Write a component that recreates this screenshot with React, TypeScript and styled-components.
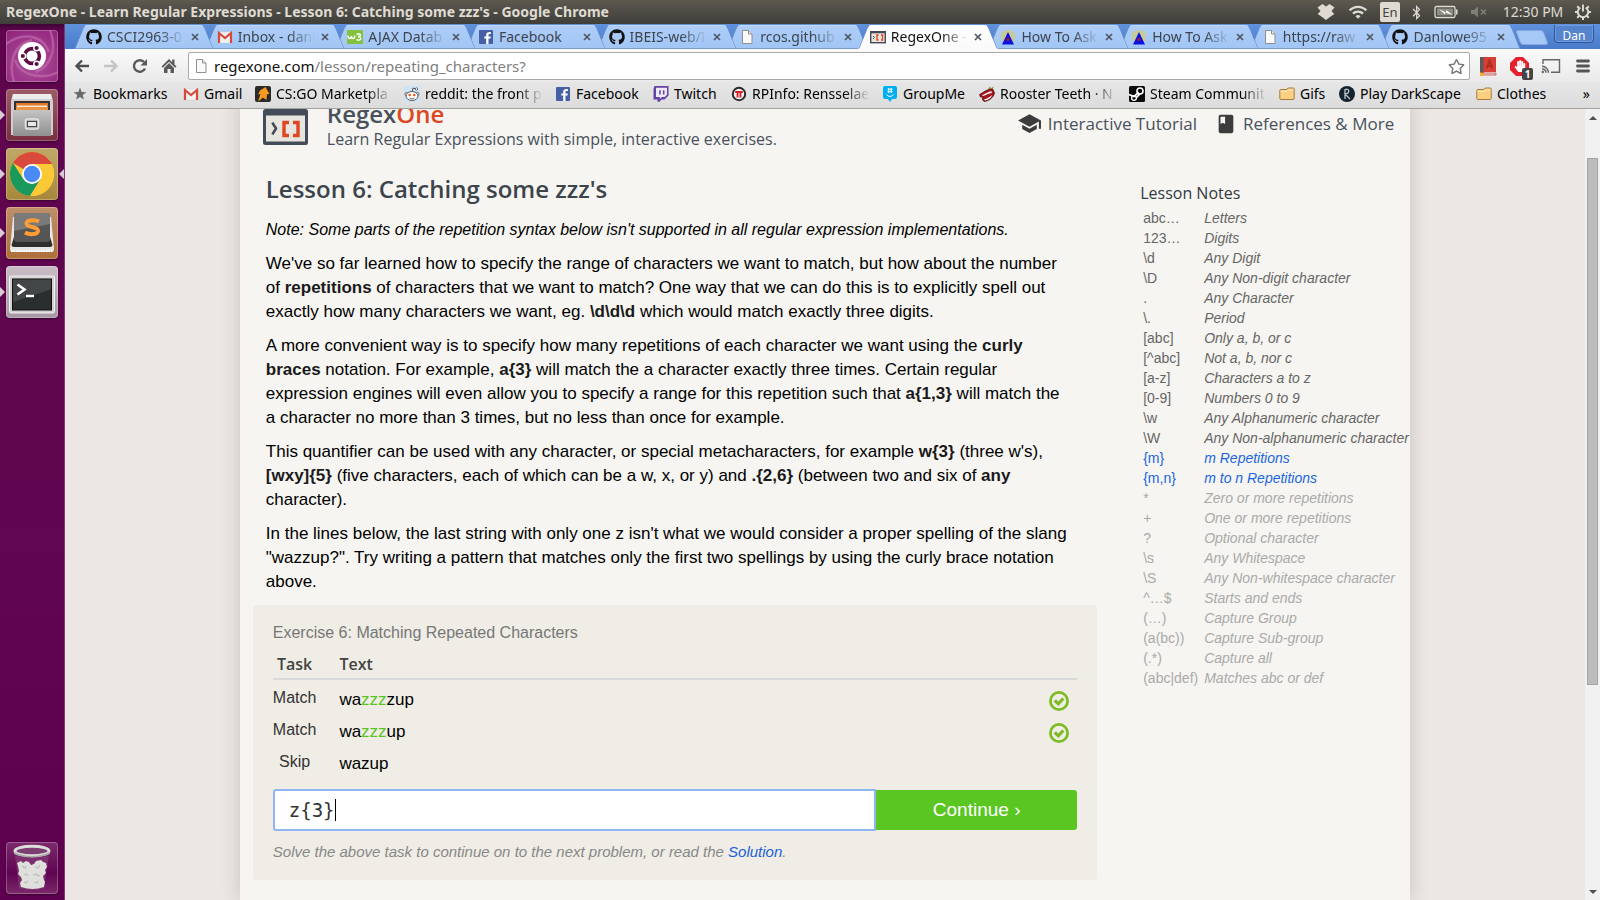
import React from "react";
import styled, { createGlobalStyle, css } from "styled-components";
import { FaGithub, FaBluetoothB, FaHandPaper, FaRegStar } from "react-icons/fa";
import { MdSchool, MdBook, MdWifi } from "react-icons/md";

const UI = `"Noto Sans", "Open Sans", sans-serif`;
const HEAD = `"Open Sans", "Noto Sans", sans-serif`;
const BODY = `"Liberation Sans", Arial, sans-serif`;

const GlobalStyle = createGlobalStyle`
  *, *::before, *::after { box-sizing: border-box; }
  html, body { margin: 0; padding: 0; height: 100%; }
  #root { height: 100%; }
  body { overflow: hidden; font-family: ${BODY}; }
  button, input { font: inherit; margin: 0; }
  button { border: 0; padding: 0; background: none; color: inherit; }
  svg { display: block; flex: none; }
  a { color: inherit; text-decoration: none; }
`;

/* ---------- desktop shell ---------- */

const Desktop = styled.div`
  display: flex;
  flex-direction: column;
  height: 100vh;
  font-family: ${UI};
`;

const MenuBar = styled.header`
  flex: none;
  height: 24px;
  padding: 0 8px 0 6px;
  display: flex;
  align-items: center;
  justify-content: space-between;
  color: #dfdbd2;
  background: linear-gradient(#5d5a4f, #55534b 20%, #3f3e39);
`;

const WindowTitle = styled.div`
  font-size: 14px;
  font-weight: 700;
  line-height: 24px;
  white-space: nowrap;
`;

const Tray = styled.div`
  display: flex;
  align-items: center;
  font-size: 14px;
  line-height: 24px;
`;

const TrayItem = styled.button<{ $w: number; $dim?: boolean }>`
  width: ${(p) => p.$w}px;
  height: 24px;
  display: flex;
  align-items: center;
  justify-content: center;
  white-space: nowrap;
  opacity: ${(p) => (p.$dim ? 0.35 : 1)};
`;

const LangBox = styled.span`
  width: 20px;
  height: 20px;
  border-radius: 2px;
  background: #dfdbd2;
  color: #45433d;
  font-size: 13px;
  line-height: 20px;
  text-align: center;
`;

const Workspace = styled.div`
  flex: 1;
  min-height: 0;
  display: flex;
`;

const Launcher = styled.nav`
  flex: none;
  width: 65px;
  padding: 6px 0 6px 6px;
  display: flex;
  flex-direction: column;
  gap: 7px;
  background: linear-gradient(#3d0433, #5f054e 6px, #610650 60%, #5d004f);
  border-right: 1px solid #7d3a70;
`;

const Tile = styled.button<{ $bg: string; $last?: boolean }>`
  position: relative;
  width: 52px;
  height: 52px;
  flex: none;
  border-radius: 4px;
  background: ${(p) => p.$bg};
  box-shadow: inset 0 0 0 1px rgba(255, 255, 255, 0.25), 0 1px 2px rgba(0, 0, 0, 0.4);
  ${(p) => p.$last && css`margin-top: auto;`}
`;

const Pip = styled.span<{ $right?: boolean }>`
  position: absolute;
  top: 21px;
  border: 5px solid transparent;
  ${(p) =>
    p.$right
      ? css`right: -6px; border-right-color: #d8ccd6; border-left-width: 0;`
      : css`left: -6px; border-left-color: #d8ccd6; border-right-width: 0;`}
`;

/* ---------- browser chrome ---------- */

const Browser = styled.main`
  flex: 1;
  min-width: 0;
  display: flex;
  flex-direction: column;
`;

const TabStrip = styled.div`
  flex: none;
  height: 25px;
  padding: 1px 6px 0 8px;
  display: flex;
  background: linear-gradient(#5f91dc, #4a7bcb);
`;

const Tabs = styled.div`
  flex: 1;
  min-width: 0;
  display: flex;
  padding-right: 12px;
  isolation: isolate;
`;

const Tab = styled.div<{ $active?: boolean; $z: number }>`
  position: relative;
  z-index: ${(p) => p.$z};
  flex: 1 1 0;
  min-width: 0;
  height: 24px;
  margin-right: -12px;
  padding: 0 16px 0 13px;
  display: flex;
  align-items: center;
  gap: 5px;
  color: ${(p) => (p.$active ? "#111" : "#3d444e")};

  &::before,
  &::after {
    content: "";
    position: absolute;
    z-index: -1;
    top: 0;
    bottom: 0;
    border-top: 1px solid ${(p) => (p.$active ? "#fff" : "#c3dbfb")};
    background: ${(p) => (p.$active ? "linear-gradient(#ffffff, #fafafa)" : "linear-gradient(#aecdf8, #a1c6f5)")};
    border-bottom: 1px solid ${(p) => (p.$active ? "#fafafa" : "#7f9dc8")};
  }
  &::before {
    left: 6px;
    right: 50%;
    border-left: 1px solid #6f94c9;
    border-top-left-radius: 4px;
    transform: skewX(-22deg);
  }
  &::after {
    left: 50%;
    margin-left: -16px;
    right: 6px;
    border-right: 1px solid #6f94c9;
    border-top-right-radius: 4px;
    transform: skewX(22deg);
  }
`;

const Fade = styled.span<{ $w?: number; $fade?: boolean }>`
  ${(p) => (p.$w ? css`flex: none; width: ${p.$w}px;` : css`flex: 1; min-width: 0;`)}
  overflow: hidden;
  white-space: nowrap;
  ${(p) => p.$fade && css`mask-image: linear-gradient(90deg, #000 calc(100% - 26px), transparent);`}
`;

const TabTitle = styled(Fade)`
  font-size: 14px;
  line-height: 22px;
`;

const CloseButton = styled.button`
  width: 10px;
  height: 10px;
  flex: none;
`;

const NewTab = styled.button`
  width: 28px;
  height: 15px;
  margin: 5px 6px 0 -4px;
  border: 1px solid #86a9de;
  border-radius: 3px;
  background: #a5c8f7;
  transform: skewX(20deg);
`;

const UserButton = styled.button`
  width: 40px;
  height: 18px;
  margin-left: 2px;
  border: 1px solid #2e5698;
  border-top: 0;
  border-radius: 0 0 4px 4px;
  background: #5583cc;
  box-shadow: inset 0 0 0 1px #6f9ae0;
  color: #fff;
  font-size: 12px;
  line-height: 20px;
  padding-top: 1px;
`;

const Toolbar = styled.div`
  flex: none;
  height: 33px;
  padding: 3px 4px 2px 7px;
  display: flex;
  align-items: center;
  background: linear-gradient(#fafafa, #e9e9e9);
`;

const ToolButton = styled.button<{ $w?: number }>`
  position: relative;
  width: ${(p) => p.$w ?? 29}px;
  height: 28px;
  display: flex;
  align-items: center;
  justify-content: center;
`;

const Omnibox = styled.div`
  flex: 1;
  height: 28px;
  padding: 0 4px 0 4px;
  display: flex;
  align-items: center;
  gap: 5px;
  border: 1px solid #a9a9a9;
  border-radius: 2px;
  background: #fff;
`;

const Address = styled.div`
  flex: 1;
  font-size: 15px;
  line-height: 26px;
  color: #808080;
  b { font-weight: 400; color: #111; }
`;

const Badge = styled.span`
  position: absolute;
  right: 0;
  bottom: 0;
  width: 11px;
  height: 12px;
  border-radius: 2px;
  background: #444;
  color: #fff;
  font-size: 10px;
  font-weight: 700;
  line-height: 12px;
  text-align: center;
`;

const BookmarksBar = styled.div`
  flex: none;
  height: 27px;
  padding: 0 10px 3px 7px;
  display: flex;
  align-items: center;
  gap: 12px;
  border-bottom: 1px solid #a2a2a2;
  background: linear-gradient(#e6e6e6, #dcdcdc);
`;

const Bookmark = styled.a`
  display: flex;
  align-items: center;
  gap: 5px;
  font-size: 14px;
  line-height: 20px;
  color: #000;
`;

const Overflow = styled.button`
  margin-left: auto;
  font-size: 14px;
  line-height: 20px;
`;

/* ---------- page ---------- */

const PageArea = styled.div`
  flex: 1;
  min-height: 0;
  display: flex;
  font-family: ${BODY};
`;

const Viewport = styled.div`
  flex: 1;
  min-width: 0;
  overflow: hidden;
  background: #ece7e4;
`;

const Sheet = styled.div`
  width: 77%;
  min-width: 1170px;
  min-height: 100%;
  margin: 0 auto;
  background: #f6f5f1;
  box-shadow: 0 0 18px rgba(60, 40, 40, 0.2);
`;

const SiteHeader = styled.header`
  height: 60px;
  margin-top: -12px;
  padding: 0 16px 0 23px;
  display: flex;
  align-items: flex-end;
  gap: 19px;
  font-family: ${HEAD};
  color: #49515c;
`;

const LogoSlot = styled.div`
  height: 48px;
`;

const Brand = styled.div`
  flex: 1;
  padding-bottom: 8px;
`;

const BrandName = styled.div`
  font-size: 24px;
  font-weight: 600;
  line-height: 30px;
  span { color: #dd4822; }
`;

const Tagline = styled.div`
  font-size: 16px;
  line-height: 20px;
`;

const SiteNav = styled.nav`
  display: flex;
  gap: 18px;
  padding-bottom: 21px;
`;

const NavLink = styled.a`
  display: flex;
  align-items: center;
  gap: 6px;
  font-size: 17px;
  line-height: 24px;
`;

const Columns = styled.div`
  display: flex;
  align-items: flex-start;
  padding: 0 0 20px 13px;
`;

const Lesson = styled.article`
  flex: 1;
  padding-top: 16px;
`;

const Prose = styled.div`
  padding: 0 26px 0 13px;
  font-size: 17px;
  line-height: 24px;
  color: #000;

  p { margin: 0 0 10px; }
  b { color: #1a1a1a; }
  i { font-size: 16px; }
`;

const LessonTitle = styled.h1`
  margin: 0 0 13px;
  font-family: ${HEAD};
  font-size: 24px;
  font-weight: 600;
  line-height: 32px;
  color: #3c444c;
`;

const Exercise = styled.section`
  margin-top: 11px;
  padding: 17px 20px;
  border-radius: 3px;
  background: #efede5;
`;

const ExerciseTitle = styled.h2`
  margin: 0 0 10px;
  font-size: 16px;
  font-weight: 400;
  line-height: 22px;
  color: #777;
`;

const TaskTable = styled.table`
  width: 100%;
  border-collapse: collapse;
  margin-bottom: 13px;

  th {
    height: 25px;
    padding: 0;
    border-bottom: 2px solid #d9d9d9;
    font-family: ${HEAD};
    font-size: 16px;
    font-weight: 600;
    line-height: 20px;
    text-align: left;
    vertical-align: top;
    color: #444;
  }
  th:first-child { text-align: center; width: 43px; }
  th:nth-child(2) { padding-left: 23px; }
  td { padding: 0; height: 32px; vertical-align: bottom; }
`;

const TaskCell = styled.td`
  text-align: center;
  font-size: 16px;
  line-height: 28px;
  color: #333;
  && { vertical-align: top; padding-top: 4px; }
`;

const TextCell = styled.td`
  font-size: 17px;
  line-height: 24px;
  && { padding-left: 23px; }
  em { font-style: normal; color: #5ac41f; }
`;

const StatusCell = styled.td`
  width: 28px;
  svg { margin-bottom: 1px; }
`;

const AnswerRow = styled.form`
  display: flex;
  align-items: center;
`;

const AnswerField = styled.label`
  position: relative;
  flex: 3 1 0;
`;

const AnswerInput = styled.input`
  display: block;
  width: 100%;
  height: 42px;
  padding: 0 14px;
  border: 2px solid #8fb5f2;
  border-radius: 3px 0 0 3px;
  background: #fff;
  font-family: "DejaVu Sans Mono", monospace;
  font-size: 19px;
  color: #333;
  outline: 0;
`;

const Caret = styled.span`
  position: absolute;
  left: 62px;
  top: 10px;
  width: 1px;
  height: 22px;
  background: #000;
`;

const Continue = styled.button`
  flex: 1 1 0;
  height: 40px;
  border-radius: 0 3px 3px 0;
  background: #5ac622;
  color: #fff;
  font-size: 19px;
`;

const Hint = styled.p`
  margin: 10px 0 0;
  font-size: 15px;
  font-style: italic;
  line-height: 22px;
  color: #888;
  a { color: #1a62dc; }
`;

const Notes = styled.aside`
  flex: none;
  width: 313px;
  padding: 25px 0 0 43px;
`;

const NotesTitle = styled.h2`
  margin: 0 0 4px;
  font-family: ${HEAD};
  font-size: 16px;
  font-weight: 400;
  line-height: 22px;
  color: #333a42;
`;

const NotesTable = styled.table`
  border-collapse: collapse;
  margin-left: 3px;
  font-size: 14px;
  line-height: 20px;
  white-space: nowrap;
  td { padding: 0; }
  td:first-child { width: 61px; }
  td:last-child { font-style: italic; }
`;

const noteColors = { known: "#666", current: "#1a66e0", later: "#aaa" };

const NoteLine = styled.tr<{ $state: keyof typeof noteColors }>`
  color: ${(p) => noteColors[p.$state]};
`;

const Scrollbar = styled.div`
  flex: none;
  width: 15px;
  display: flex;
  flex-direction: column;
  align-items: center;
  padding: 6px 0 5px;
  background: #f1f1f1;
`;

const Track = styled.div`
  flex: 1;
  width: 11px;
  margin: 38px 0 0;
`;

const Thumb = styled.div`
  height: 72%;
  border: 1px solid #a5a5a5;
  background: #bcbcbc;
`;

/* ---------- drawings ---------- */

const StarIcon = () => (
  <svg width="16" height="16" viewBox="0 0 16 16">
    <path d="M8 1.500l1.700 4.400 4.600.3-3.600 2.900 1.200 4.500L8 11.100l-3.900 2.500 1.200-4.500L1.700 6.200l4.600-.3z" fill="#6a6a6a" />
  </svg>
);
const DropboxIcon = () => (
  <svg width="18" height="18" viewBox="0 0 18 18">
    <path d="M5.500 1L9 3.500 12.500 1 17.500 4.500 14.500 8l2.800 3-3.300 2.300L9 17l-5-3.700L.7 11l2.800-3L.5 4.500z" fill="#dfdbd2" />
  </svg>
);
const MutedIcon = () => (
  <svg width="18" height="14" viewBox="0 0 18 14">
    <path d="M1 5h3l4-3.500v11L4 9H1z" fill="#dfdbd2" />
    <path d="M11 4.500l5 5M16 4.500l-5 5" stroke="#dfdbd2" strokeWidth="1.700" />
  </svg>
);
const CastIcon = () => (
  <svg width="20" height="16" viewBox="0 0 20 16">
    <path d="M2 6V1.800h16.500v12.400H10" fill="none" stroke="#666" strokeWidth="1.400" />
    <path d="M1 8.300a6.700 6.700 0 0 1 6.500 6.500M1 11a4 4 0 0 1 4 3.800" fill="none" stroke="#666" strokeWidth="1.500" />
    <circle cx="1.800" cy="14" r="1.200" fill="#666" />
  </svg>
);
const GmailIcon = () => (
  <svg width="16" height="16" viewBox="0 0 16 16">
    <rect x="1" y="3" width="14" height="11" rx="1" fill="#f2f2f2" stroke="#ccc" strokeWidth=".5" />
    <path d="M2 14V4l6 5 6-5v10" fill="none" stroke="#d6493b" strokeWidth="2.200" />
  </svg>
);
const W3Icon = () => (
  <svg width="16" height="16" viewBox="0 0 16 16">
    <rect y="1" width="16" height="14" rx="1" fill="#82c23d" />
    <path d="M1 6.500q0 3 1.700 3T4.400 7q0 2.500 1.700 2.500T7.900 6.500M9.500 5.500q3.500-1.500 4 .3 0 1.700-2.500 2 3 .2 2.700 2.200-1 2-4.200.5" fill="none" stroke="#fff" strokeWidth="1.400" />
  </svg>
);
const FacebookIcon = () => (
  <svg width="16" height="16" viewBox="0 0 16 16">
    <rect x="1" y="1" width="14" height="14" rx="1" fill="#4760a5" />
    <path d="M10.500 15V9.600h2l.3-2.200h-2.300V6c0-.7.3-1.100 1.200-1.100h1.200V3c-3-.4-4.700.5-4.700 2.800v1.600H6.300v2.200h1.900V15z" fill="#fff" />
  </svg>
);
const PageIcon = () => (
  <svg width="16" height="16" viewBox="0 0 16 16">
    <path d="M3.500 1.500h6l3.500 3.500v9.500H3.500z" fill="#fafafa" stroke="#8f8f8f" />
    <path d="M9.500 1.500V5H13" fill="#eee" stroke="#8f8f8f" />
  </svg>
);
const RegexFavicon = () => (
  <svg width="16" height="16" viewBox="0 0 16 16">
    <rect x=".7" y="2.700" width="14.600" height="11" fill="#e7e5de" stroke="#434a56" strokeWidth="1.400" />
    <path d="M1 3.500h14" stroke="#434a56" strokeWidth="1.600" />
    <path d="M3 7l1.500 1.500L3 10" fill="none" stroke="#434a56" />
    <path d="M8.500 6H7v5h1.500M11 6h1.500v5H11" fill="none" stroke="#dd4822" strokeWidth="1.400" />
  </svg>
);
const EsrIcon = () => (
  <svg width="16" height="16" viewBox="0 0 16 16">
    <path d="M8 0l1.500 2L12 .8l.3 2.500 2.700.2-1 2.300 2 1.700-2 1.500 1 2.500-2 .5H3l-2-.5L2 9 0 7.500l2-1.700-1-2.300 2.700-.2L4 .8 6.500 2z" fill="#c8cc94" />
    <path d="M8 3l6 12.500H2z" fill="#0a12e0" />
    <circle cx="8" cy="10.500" r="1.700" fill="#a3143c" />
  </svg>
);
const CsgoIcon = () => (
  <svg width="16" height="16" viewBox="0 0 16 16">
    <rect width="16" height="16" rx="2" fill="#2a2a2a" />
    <path d="M5 4.500L10.500 1l4 7-2.500.2-.5 5.800-3.500-2.500L3 15.500 5.500 8l-2.500.5z" fill="#f79a1d" />
  </svg>
);
const RedditIcon = () => (
  <svg width="16" height="16" viewBox="0 0 16 16">
    <rect width="16" height="16" fill="#cfe3f7" />
    <path d="M8 6l1-4 3 1" fill="none" stroke="#444" strokeWidth=".9" />
    <circle cx="12.500" cy="3" r="1.200" fill="#fff" stroke="#444" strokeWidth=".7" />
    <circle cx="2.500" cy="8" r="1.600" fill="#fff" stroke="#444" strokeWidth=".7" />
    <circle cx="13.500" cy="8" r="1.600" fill="#fff" stroke="#444" strokeWidth=".7" />
    <ellipse cx="8" cy="10" rx="6" ry="4.500" fill="#fff" stroke="#444" strokeWidth=".9" />
    <circle cx="5.700" cy="9" r="1.300" fill="#f4511e" />
    <circle cx="10.300" cy="9" r="1.300" fill="#f4511e" />
    <path d="M5.500 12c1.500 1 3.500 1 5 0" fill="none" stroke="#444" strokeWidth=".8" />
  </svg>
);
const TwitchIcon = () => (
  <svg width="16" height="16" viewBox="0 0 16 16">
    <path d="M1.500 0H15.500V9.500L11.500 13.500H8.500L6.500 15.800H4.500V13.500H.5V3z" fill="#6441a5" />
    <path d="M3 1.800h11v7l-2.300 2.300H8.800l-2 2v-2H3z" fill="#eee9f5" />
    <path d="M7 4.200v4.200M10.700 4.200v4.200" stroke="#6441a5" strokeWidth="1.500" />
  </svg>
);
const RpiIcon = () => (
  <svg width="16" height="16" viewBox="0 0 16 16">
    <circle cx="8" cy="8" r="6.200" fill="#f4f4f4" stroke="#2b2b2b" strokeWidth="2" />
    <path d="M4.200 5h7.600v2H4.200zM5.600 6.500h1.900v5H5.600zM8.500 6.500h1.900v5H8.500z" fill="#d61f26" />
  </svg>
);
const GroupMeIcon = () => (
  <svg width="16" height="16" viewBox="0 0 16 16">
    <path d="M3 0h10q2 0 2 2v9q0 2-2 2h-3l-2 3-2-3H3q-2 0-2-2V2q0-2 2-2z" fill="#00aff0" />
    <path d="M6.700 2v5M9.300 2v5M5.500 3.300h5M5.500 5.700h5M4.500 8.500c1.500 2.500 5.500 2.500 7 0" fill="none" stroke="#fff" strokeWidth="1" />
  </svg>
);
const RoosterIcon = () => (
  <svg width="16" height="16" viewBox="0 0 16 16">
    <path d="M9 3l2-2.500.8 2L14.500.5l-.8 3.500z" fill="#a87b35" />
    <path d="M.5 8.500C4 7 8 2.500 14 3.500l1.500 3.500c-1 5-6 8-10.500 8.500l-2-2.500 2-1.500-3.500-.5z" fill="#a8121c" stroke="#3a0a0c" strokeWidth=".7" />
    <path d="M3 9c4-1 6-4 10-3.500l-.5 1.500C9.500 7 7 9.500 4 10z" fill="#fff" />
    <path d="M5 13.500c3.500-.5 5.500-2.500 8-4.500l-1 2.500c-2 1.500-3.500 2.700-6 3z" fill="#fff" />
  </svg>
);
const SteamIcon = () => (
  <svg width="16" height="16" viewBox="0 0 16 16">
    <rect width="16" height="16" rx="1.500" fill="#0b0b0b" />
    <circle cx="11" cy="5" r="3" fill="none" stroke="#fff" strokeWidth="1.600" />
    <path d="M0 8.500l5 2L9 7l1.500 1.300L7 12" fill="none" stroke="#fff" strokeWidth="1.800" />
    <circle cx="5" cy="12" r="2.400" fill="none" stroke="#fff" strokeWidth="1.300" />
  </svg>
);
const FolderIcon = () => (
  <svg width="16" height="16" viewBox="0 0 16 16">
    <path d="M.8 12.500V4.500q0-1 1-1h6L9 2h5.200q1 0 1 1v9.500q0 1-1 1H1.800q-1 0-1-1z" fill="#fbd083" stroke="#a87a3c" />
    <path d="M1.500 5.500h6.500L9.500 4h5" fill="none" stroke="#ffe9bd" />
  </svg>
);
const DarkScapeIcon = () => (
  <svg width="16" height="16" viewBox="0 0 16 16">
    <circle cx="8" cy="8" r="8" fill="#14232e" />
    <path d="M6 13V3.500c5-1.500 5 4 0 4.500l5 5" fill="none" stroke="#b9c2c8" strokeWidth="1.300" />
  </svg>
);
const CloseIcon = () => (
  <svg width="10" height="10" viewBox="0 0 10 10">
    <path d="M2 2l6 6M8 2l-6 6" stroke="#4f5763" strokeWidth="1.700" />
  </svg>
);
const ArrowIcon = ({ color, flip }: { color: string; flip?: boolean }) => (
  <svg width="16" height="16" viewBox="0 0 16 16">
    <path d={flip ? "M1 8h12M8 2.500L13.500 8 8 13.500" : "M15 8H3M8 2.500L2.500 8 8 13.500"} fill="none" stroke={color} strokeWidth="2.400" />
  </svg>
);
const ReloadIcon = () => (
  <svg width="16" height="16" viewBox="0 0 16 16">
    <path d="M13 10.500A5.800 5.800 0 1 1 12 4" fill="none" stroke="#5a5a5a" strokeWidth="2.400" />
    <path d="M15 1v6.500H8.500z" fill="#5a5a5a" />
  </svg>
);
const HomeIcon = () => (
  <svg width="16" height="16" viewBox="0 0 16 16">
    <path d="M8 1L.5 8.500l1.300 1.300L8 3.700l6.200 6.100 1.300-1.300-2-2V1.500h-2.300v2.700z" fill="#5a5a5a" />
    <path d="M8 5l5 5v5H9.500v-4h-3v4H3v-5z" fill="#5a5a5a" />
  </svg>
);
const MenuIcon = () => (
  <svg width="14" height="14" viewBox="0 0 14 14">
    <path d="M1.500 2h11M1.500 7h11M1.500 12h11" stroke="#555" strokeWidth="2.800" strokeLinecap="round" />
  </svg>
);
const DictIcon = () => (
  <svg width="18" height="20" viewBox="0 0 18 20">
    <path d="M1 1h16v15H5v3H1z" fill="#d83f34" />
    <path d="M1 1h3.500v15L1 17z" fill="#5b5b5b" />
    <path d="M3 17h14v2H3z" fill="#e8d9d6" stroke="#c63a30" strokeWidth=".7" />
    <path d="M1 16.500l4 .5-1 3H1z" fill="#f0b229" />
    <path d="M7.500 12.500l3-8 3 8M8.500 10h4" fill="none" stroke="#ad2b22" strokeWidth="1.800" />
  </svg>
);
const StopHandIcon = () => (
  <svg width="19" height="19" viewBox="0 0 19 19">
    <path d="M6 0h7l6 6v7l-6 6H6l-6-6V6z" fill="#e3202b" />
    <g transform="translate(4 3)" color="#fff">
      <FaHandPaper size={12} />
    </g>
  </svg>
);
const BatteryIcon = () => (
  <svg width="24" height="14" viewBox="0 0 24 14">
    <rect x="1" y="1.500" width="20" height="11" rx="1.500" fill="none" stroke="#dfdbd2" strokeWidth="1.300" />
    <path d="M22 4.500h1.500v5H22z" fill="#dfdbd2" />
    <rect x="3" y="3.500" width="16" height="7" fill="#8f8c84" />
    <path d="M5 4l7 3.500.5-2.500 6 5-7-2.500-.5 2z" fill="#fff" />
  </svg>
);
const PowerGear = () => (
  <svg width="18" height="18" viewBox="0 0 18 18">
    <path d="M6.300 4.600A5.200 5.200 0 1 0 11.700 4.600" fill="none" stroke="#dfdbd2" strokeWidth="1.900" />
    <path d="M9 1.500V8.500" stroke="#dfdbd2" strokeWidth="1.900" />
    <path d="M9 14.500V17M1 9h2.500M14.500 9H17M3.200 3.200l1.900 1.900M12.900 12.900l1.900 1.900M14.800 3.200l-1.900 1.900M5.100 12.900l-1.900 1.900" stroke="#dfdbd2" strokeWidth="2" />
  </svg>
);
const CheckIcon = () => (
  <svg width="20" height="20" viewBox="0 0 20 20">
    <circle cx="10" cy="10" r="8.600" fill="none" stroke="#7cbb22" strokeWidth="2.700" />
    <path d="M5.800 9.300l3.500 3.500 5-5.300" fill="none" stroke="#7cbb22" strokeWidth="3.200" />
  </svg>
);
const Logo = () => (
  <svg width="45" height="36" viewBox="0 0 45 36">
    <rect width="45" height="36" rx="2.500" fill="#434c58" />
    <rect x="3" y="6.500" width="39" height="26" fill="#e6e6de" />
    <path d="M9.500 13.500c1 3 3 4.500 3.500 6-.5 1.500-2.500 3-3.500 6" fill="none" stroke="#434c58" strokeWidth="2.600" />
    <path d="M26 13.500h-5v13h5M30 13.500h5v13h-5" fill="none" stroke="#dd4822" strokeWidth="3.400" />
  </svg>
);

const UbuntuArt = () => (
  <svg width="52" height="52" viewBox="0 0 52 52">
    <path d="M0 14C16 2 36 4 43 22M8 52C2 32 8 14 26 10M52 42C36 50 14 46 9 30M44 0c8 20 0 36-14 42" fill="none" stroke="#c676b4" strokeWidth="2.500" opacity=".55" />
    <circle cx="26" cy="26" r="14" fill="#fff" />
    <circle cx="26" cy="26" r="7.400" fill="none" stroke="#5d0f45" strokeWidth="3.600" />
    <g fill="#5d0f45" stroke="#fff" strokeWidth="1.400">
      <circle cx="16.800" cy="26" r="2.800" />
      <circle cx="30.600" cy="18" r="2.800" />
      <circle cx="30.600" cy="34" r="2.800" />
    </g>
  </svg>
);
const FilesArt = () => (
  <svg width="52" height="52" viewBox="0 0 52 52">
    <defs>
      <linearGradient id="cab" x1="0" y1="0" x2="0" y2="1"><stop offset="0" stopColor="#c4c4c4" /><stop offset="1" stopColor="#8f8f8f" /></linearGradient>
    </defs>
    <path d="M7 5h38l2 7v34H5V12z" fill="#cfcfcf" />
    <path d="M7 5h38l1 5H6z" fill="#ececec" />
    <rect x="8" y="12" width="36" height="12" fill="#3a3230" />
    <path d="M10 14h32v10H10z" fill="#e07b2c" />
    <path d="M11 16.500h30v2H11z" fill="#f6e6d2" />
    <path d="M10 19l6-1h26v6H10z" fill="#ec9445" />
    <rect x="7" y="21" width="38" height="26" fill="url(#cab)" />
    <rect x="19.500" y="30" width="13" height="10" rx="2" fill="#b3b3b3" stroke="#e4e4e4" strokeWidth="1.500" />
    <rect x="21.500" y="32.500" width="9" height="5" fill="#e8e8e8" stroke="#444" />
  </svg>
);
const ChromeArt = () => (
  <svg width="52" height="52" viewBox="0 0 52 52">
    <circle cx="26" cy="26" r="22" fill="#fbc935" />
    <path d="M26 26L6.950 15A22 22 0 0 1 45.050 15z" fill="#d9493c" />
    <path d="M26 16h20a22 22 0 0 0-2-3H26z" fill="#d9493c" />
    <path d="M6.950 15A22 22 0 0 0 24 47.900L34.700 31 17.300 31z" fill="#19995b" />
    <path d="M34.700 31L24 47.900A22 22 0 0 0 45.800 16H26z" fill="#fbc935" />
    <circle cx="26" cy="26" r="10" fill="#fff" />
    <circle cx="26" cy="26" r="8.200" fill="#4a8af4" />
  </svg>
);
const SublimeArt = () => (
  <svg width="52" height="52" viewBox="0 0 52 52">
    <path d="M7 10h38l3 32q0 3-3 3H7q-3 0-3-3z" fill="#e6e6e6" />
    <path d="M8 30h36l2.500 8q0 2-2.500 2H8q-2.500 0-2.500-2z" fill="#2d2d2d" />
    <rect x="8" y="6" width="36" height="29" rx="3" fill="#555" />
    <path d="M8 8q0-2 2-2h32q2 0 2 2v9L8 24z" fill="#7a7a7a" />
    <path d="M33 14.500c-4-2-12-2-12.500 2-.5 4.500 12 2.500 11.500 7.500-.5 4-9 3.800-13 1.500" fill="none" stroke="#ff9c35" strokeWidth="4" />
    <path d="M5 44h42" stroke="#fff" strokeWidth="2" strokeDasharray="1.500 1" />
  </svg>
);
const TerminalArt = () => (
  <svg width="52" height="52" viewBox="0 0 52 52">
    <rect x="3.500" y="10" width="45" height="37" rx="1.500" fill="#d2d0d2" stroke="#f2f0f2" />
    <rect x="6.500" y="13" width="39" height="31" fill="#2b2e2f" stroke="#111" />
    <path d="M7 13.500h38v10L7 36z" fill="#5a5d5e" opacity=".5" />
    <path d="M11.500 18.500l7 5-7 5" fill="none" stroke="#fff" strokeWidth="2.600" />
    <path d="M20 30h8" stroke="#fff" strokeWidth="2.400" />
  </svg>
);
const TrashArt = () => (
  <svg width="52" height="52" viewBox="0 0 52 52">
    <path d="M9 13l4 33q13 4 25 0l5-33z" fill="#8d4a82" opacity=".5" />
    <path d="M12 24l-1-3 4-2 2 2 3-2 3 1 2 3 3-1 2-3 5-1 2 2 3 1 1 4-2 3 1 3-3 3 1 4 1 2-1 5q-11 4-23 0l-1-4 2-3-1-3-3-3 1-3z" fill="#dfe0db" />
    <path d="M16 24l3 2 1-2M29 25l3 1 2-3M18 33l2-1 2 2M27 33l3-1 2 2 2-1M18 40l2 1 2-2M28 40l3 1 1-2" fill="none" stroke="#bdbfb8" strokeWidth="1.300" />
    <ellipse cx="26" cy="9" rx="17" ry="4.800" fill="#7c3f70" stroke="#dcdedb" strokeWidth="3" />
    <path d="M8 10q18 8 36 0v2q-18 7-36 0z" fill="#a9aba8" />
  </svg>
);

/* ---------- data ---------- */

const tabs: { icon: React.ReactNode; title: string; fade?: boolean; active?: boolean }[] = [
  { icon: <FaGithub size={16} color="#111" />, title: "CSCI2963-01", fade: true },
  { icon: <GmailIcon />, title: "Inbox - danl", fade: true },
  { icon: <W3Icon />, title: "AJAX Datab", fade: true },
  { icon: <FacebookIcon />, title: "Facebook" },
  { icon: <FaGithub size={16} color="#111" />, title: "IBEIS-web/I", fade: true },
  { icon: <PageIcon />, title: "rcos.github", fade: true },
  { icon: <RegexFavicon />, title: "RegexOne -", fade: true, active: true },
  { icon: <EsrIcon />, title: "How To Ask", fade: true },
  { icon: <EsrIcon />, title: "How To Ask", fade: true },
  { icon: <PageIcon />, title: "https://raw", fade: true },
  { icon: <FaGithub size={16} color="#111" />, title: "Danlowe95", fade: true },
];

const bookmarks: { icon: React.ReactNode; title: string; w: number; fade?: boolean }[] = [
  { icon: <StarIcon />, title: "Bookmarks", w: 78 },
  { icon: <GmailIcon />, title: "Gmail", w: 39 },
  { icon: <CsgoIcon />, title: "CS:GO Marketpla", w: 116, fade: true },
  { icon: <RedditIcon />, title: "reddit: the front p", w: 118, fade: true },
  { icon: <FacebookIcon />, title: "Facebook", w: 65 },
  { icon: <TwitchIcon />, title: "Twitch", w: 45 },
  { icon: <RpiIcon />, title: "RPInfo: Rensselae", w: 118, fade: true },
  { icon: <GroupMeIcon />, title: "GroupMe", w: 64 },
  { icon: <RoosterIcon />, title: "Rooster Teeth · N", w: 117, fade: true },
  { icon: <SteamIcon />, title: "Steam Communit", w: 117, fade: true },
  { icon: <FolderIcon />, title: "Gifs", w: 27 },
  { icon: <DarkScapeIcon />, title: "Play DarkScape", w: 104 },
  { icon: <FolderIcon />, title: "Clothes", w: 53 },
];

const notes: [string, string, keyof typeof noteColors][] = [
  ["abc…", "Letters", "known"],
  ["123…", "Digits", "known"],
  ["\\d", "Any Digit", "known"],
  ["\\D", "Any Non-digit character", "known"],
  [".", "Any Character", "known"],
  ["\\.", "Period", "known"],
  ["[abc]", "Only a, b, or c", "known"],
  ["[^abc]", "Not a, b, nor c", "known"],
  ["[a-z]", "Characters a to z", "known"],
  ["[0-9]", "Numbers 0 to 9", "known"],
  ["\\w", "Any Alphanumeric character", "known"],
  ["\\W", "Any Non-alphanumeric character", "known"],
  ["{m}", "m Repetitions", "current"],
  ["{m,n}", "m to n Repetitions", "current"],
  ["*", "Zero or more repetitions", "later"],
  ["+", "One or more repetitions", "later"],
  ["?", "Optional character", "later"],
  ["\\s", "Any Whitespace", "later"],
  ["\\S", "Any Non-whitespace character", "later"],
  ["^…$", "Starts and ends", "later"],
  ["(…)", "Capture Group", "later"],
  ["(a(bc))", "Capture Sub-group", "later"],
  ["(.*)", "Capture all", "later"],
  ["(abc|def)", "Matches abc or def", "later"],
];

const tasks = [
  { task: "Match", pre: "wa", hit: "zzz", post: "zup", ok: true },
  { task: "Match", pre: "wa", hit: "zzz", post: "up", ok: true },
  { task: "Skip", pre: "wazup", hit: "", post: "", ok: false },
];

export default function App() {
  const [answer, setAnswer] = React.useState("z{3}");
  return (
    <Desktop>
      <GlobalStyle />
      <MenuBar>
        <WindowTitle>RegexOne - Learn Regular Expressions - Lesson 6: Catching some zzz's - Google Chrome</WindowTitle>
        <Tray>
          <TrayItem $w={32} aria-label="Dropbox"><DropboxIcon /></TrayItem>
          <TrayItem $w={32} aria-label="Network"><MdWifi size={20} /></TrayItem>
          <TrayItem $w={32} aria-label="Keyboard layout"><LangBox>En</LangBox></TrayItem>
          <TrayItem $w={20} aria-label="Bluetooth"><FaBluetoothB size={15} /></TrayItem>
          <TrayItem $w={40} aria-label="Battery"><BatteryIcon /></TrayItem>
          <TrayItem $w={26} $dim aria-label="Sound"><MutedIcon /></TrayItem>
          <TrayItem $w={82}>12:30 PM</TrayItem>
          <TrayItem $w={18} aria-label="Session"><PowerGear /></TrayItem>
        </Tray>
      </MenuBar>
      <Workspace>
        <Launcher>
          <Tile aria-label="Dash" $bg="radial-gradient(circle at 50% 60%, #b0559c, #8f1f7a)"><UbuntuArt /></Tile>
          <Tile aria-label="Files" $bg="linear-gradient(#9c5a67, #7a2f40)"><Pip /><FilesArt /></Tile>
          <Tile aria-label="Chrome" $bg="linear-gradient(#c0a968, #a8873a)"><Pip /><Pip $right /><ChromeArt /></Tile>
          <Tile aria-label="Sublime Text" $bg="linear-gradient(#c08f6b, #ad6f3a)"><Pip /><SublimeArt /></Tile>
          <Tile aria-label="Terminal" $bg="linear-gradient(#cbbdc8, #a796a5)"><Pip /><TerminalArt /></Tile>
          <Tile aria-label="Trash" $last $bg="linear-gradient(#7c2a6d, #5f0450 60%, #7a2a6b)"><TrashArt /></Tile>
        </Launcher>
        <Browser>
          <TabStrip>
            <Tabs>
              {tabs.map((t, i) => (
                <Tab key={i} $active={t.active} $z={t.active ? 20 : 12 - i}>
                  {t.icon}
                  <TabTitle $fade={t.fade}>{t.title}</TabTitle>
                  <CloseButton aria-label="Close tab"><CloseIcon /></CloseButton>
                </Tab>
              ))}
            </Tabs>
            <NewTab aria-label="New tab" />
            <UserButton>Dan</UserButton>
          </TabStrip>
          <Toolbar>
            <ToolButton $w={20} aria-label="Back"><ArrowIcon color="#4f4f4f" /></ToolButton>
            <ToolButton $w={38} aria-label="Forward"><ArrowIcon color="#c4c4c4" flip /></ToolButton>
            <ToolButton $w={20} aria-label="Reload"><ReloadIcon /></ToolButton>
            <ToolButton $w={38} aria-label="Home"><HomeIcon /></ToolButton>
            <Omnibox>
              <PageIcon />
              <Address><b>regexone.com</b>/lesson/repeating_characters?</Address>
              <FaRegStar size={17} color="#777" />
            </Omnibox>
            <ToolButton $w={36} aria-label="Dictionary"><DictIcon /></ToolButton>
            <ToolButton $w={27} aria-label="Ad blocker"><StopHandIcon /><Badge>1</Badge></ToolButton>
            <ToolButton $w={36} aria-label="Cast"><CastIcon /></ToolButton>
            <ToolButton $w={27} aria-label="Menu"><MenuIcon /></ToolButton>
          </Toolbar>
          <BookmarksBar>
            {bookmarks.map((b) => (
              <Bookmark key={b.title} href="#">
                {b.icon}
                <Fade $w={b.w} $fade={b.fade}>{b.title}</Fade>
              </Bookmark>
            ))}
            <Overflow>»</Overflow>
          </BookmarksBar>
          <PageArea>
            <Viewport>
              <Sheet>
                <SiteHeader>
                  <LogoSlot><Logo /></LogoSlot>
                  <Brand>
                    <BrandName>Regex<span>One</span></BrandName>
                    <Tagline>Learn Regular Expressions with simple, interactive exercises.</Tagline>
                  </Brand>
                  <SiteNav>
                    <NavLink href="#"><MdSchool size={25} color="#3c3c3c" />Interactive Tutorial</NavLink>
                    <NavLink href="#"><MdBook size={22} color="#3c3c3c" />References &amp; More</NavLink>
                  </SiteNav>
                </SiteHeader>
                <Columns>
                  <Lesson>
                    <Prose>
                      <LessonTitle>Lesson 6: Catching some zzz's</LessonTitle>
                      <p><i>Note: Some parts of the repetition syntax below isn't supported in all regular expression implementations.</i></p>
                      <p>We've so far learned how to specify the range of characters we want to match, but how about the number of <b>repetitions</b> of characters that we want to match? One way that we can do this is to explicitly spell out exactly how many characters we want, eg. <b>\d\d\d</b> which would match exactly three digits.</p>
                      <p>A more convenient way is to specify how many repetitions of each character we want using the <b>curly braces</b> notation. For example, <b>{"a{3}"}</b> will match the a character exactly three times. Certain regular expression engines will even allow you to specify a range for this repetition such that <b>{"a{1,3}"}</b> will match the a character no more than 3 times, but no less than once for example.</p>
                      <p>This quantifier can be used with any character, or special metacharacters, for example <b>{"w{3}"}</b> (three w's), <b>{"[wxy]{5}"}</b> (five characters, each of which can be a w, x, or y) and <b>{".{2,6}"}</b> (between two and six of <b>any</b> character).</p>
                      <p>In the lines below, the last string with only one z isn't what we would consider a proper spelling of the slang "wazzup?". Try writing a pattern that matches only the first two spellings by using the curly brace notation above.</p>
                    </Prose>
                    <Exercise>
                      <ExerciseTitle>Exercise 6: Matching Repeated Characters</ExerciseTitle>
                      <TaskTable>
                        <thead><tr><th>Task</th><th>Text</th><th></th></tr></thead>
                        <tbody>
                          {tasks.map((t, i) => (
                            <tr key={i}>
                              <TaskCell>{t.task}</TaskCell>
                              <TextCell>{t.pre}<em>{t.hit}</em>{t.post}</TextCell>
                              <StatusCell>{t.ok && <CheckIcon />}</StatusCell>
                            </tr>
                          ))}
                        </tbody>
                      </TaskTable>
                      <AnswerRow onSubmit={(e) => e.preventDefault()}>
                        <AnswerField>
                          <AnswerInput aria-label="Pattern" value={answer} onChange={(e) => setAnswer(e.target.value)} />
                          <Caret />
                        </AnswerField>
                        <Continue>Continue ›</Continue>
                      </AnswerRow>
                      <Hint>Solve the above task to continue on to the next problem, or read the <a href="#">Solution</a>.</Hint>
                    </Exercise>
                  </Lesson>
                  <Notes>
                    <NotesTitle>Lesson Notes</NotesTitle>
                    <NotesTable>
                      <tbody>
                        {notes.map(([sym, text, state]) => (
                          <NoteLine key={sym} $state={state}><td>{sym}</td><td>{text}</td></NoteLine>
                        ))}
                      </tbody>
                    </NotesTable>
                  </Notes>
                </Columns>
              </Sheet>
            </Viewport>
            <Scrollbar aria-hidden="true">
              <svg width="8" height="5" viewBox="0 0 8 5"><path d="M0 5l4-4 4 4z" fill="#505050" /></svg>
              <Track><Thumb /></Track>
              <svg width="8" height="5" viewBox="0 0 8 5"><path d="M0 0l4 4 4-4z" fill="#505050" /></svg>
            </Scrollbar>
          </PageArea>
        </Browser>
      </Workspace>
    </Desktop>
  );
}
